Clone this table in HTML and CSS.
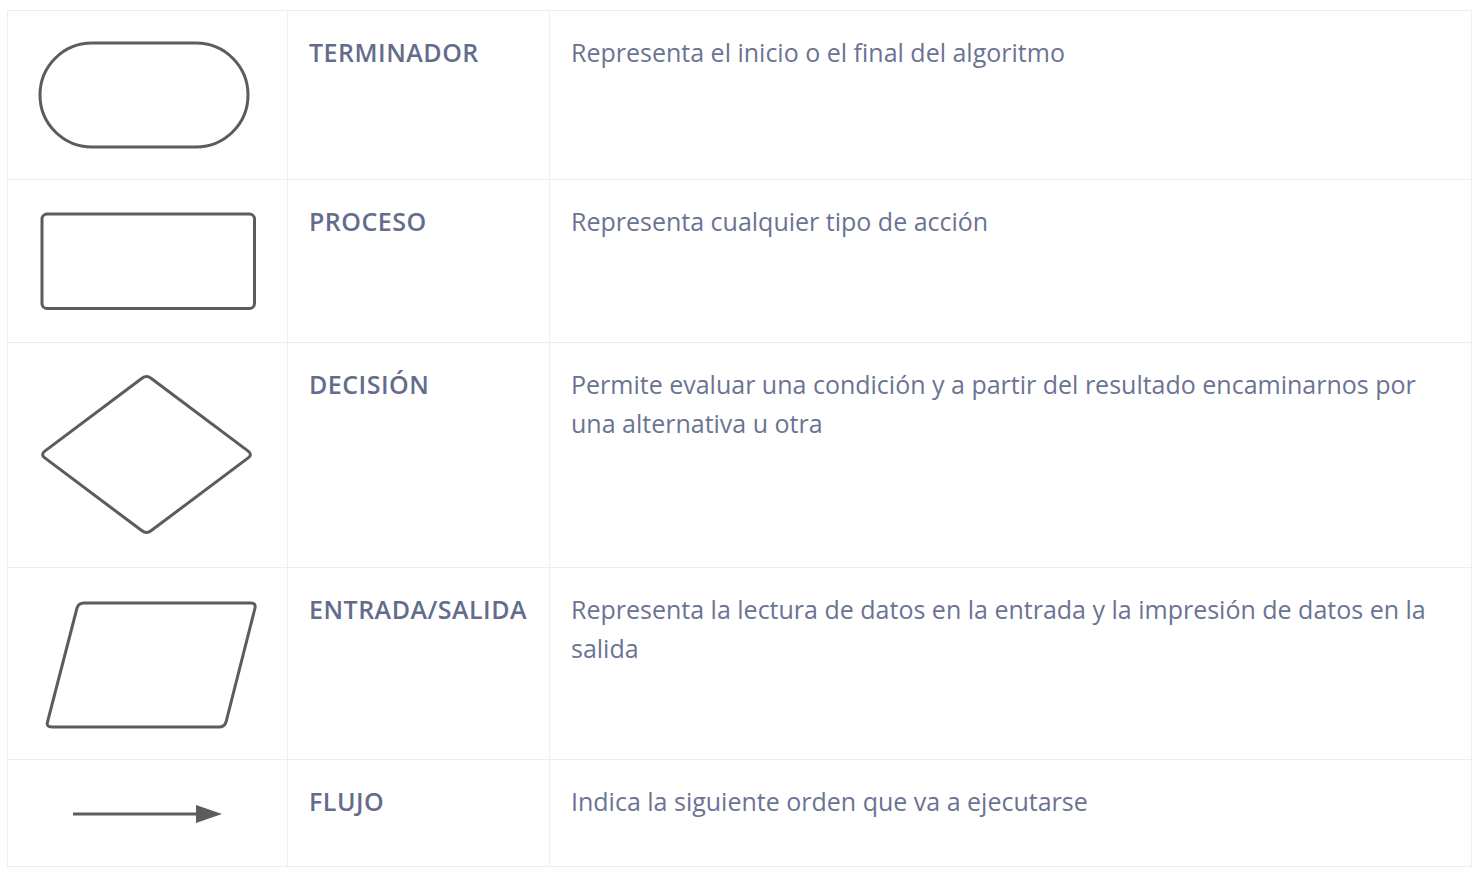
FILE: index.html
```html
<!DOCTYPE html>
<html lang="es">
<head>
<meta charset="utf-8">
<title>Símbolos de diagrama de flujo</title>
<link rel="stylesheet" href="styles.css">
</head>
<body>
<table class="symbols">
  <tr class="row r1">
    <td class="c-shape">
      <svg class="shape" width="233" height="122" viewBox="0 0 233 122">
        <rect x="9" y="9" width="208" height="104" rx="52" ry="52"/>
      </svg>
    </td>
    <td class="c-name">TERMINADOR</td>
    <td class="c-desc">Representa el inicio o el final del algoritmo</td>
  </tr>
  <tr class="row r2">
    <td class="c-shape">
      <svg class="shape" width="233" height="116" viewBox="0 0 233 116">
        <rect x="11" y="11" width="212.5" height="94.5" rx="5" ry="5"/>
      </svg>
    </td>
    <td class="c-name">PROCESO</td>
    <td class="c-desc">Representa cualquier tipo de acción</td>
  </tr>
  <tr class="row r3">
    <td class="c-shape">
      <svg class="shape" width="233" height="178" viewBox="0 0 233 178">
        <path d="M111 12.2 Q115.5 8.8 120 12.2 L217.2 85.1 Q221.7 88.5 217.2 91.9 L120 164.8 Q115.5 168.2 111 164.8 L13.8 91.9 Q9.3 88.5 13.8 85.1 Z"/>
      </svg>
    </td>
    <td class="c-name">DECISIÓN</td>
    <td class="c-desc">Permite evaluar una condición y a partir del resultado encaminarnos por una alternativa u otra</td>
  </tr>
  <tr class="row r4">
    <td class="c-shape">
      <svg class="shape" width="233" height="145" viewBox="0 0 233 145">
        <path d="M53 12 L220 12 Q225 12 224 17 L195 131 Q193.5 136 188 136 L21 136 Q15 136 16.5 131 L46 17 Q47.5 12 53 12 Z"/>
      </svg>
    </td>
    <td class="c-name">ENTRADA/SALIDA</td>
    <td class="c-desc">Representa la lectura de datos en la entrada y la impresión de datos en la salida</td>
  </tr>
  <tr class="row r5">
    <td class="c-shape">
      <svg class="shape" width="233" height="60" viewBox="0 0 233 60">
        <line x1="42" y1="31" x2="168" y2="31"/>
        <polygon class="head" points="165,22 191,31 165,40"/>
      </svg>
    </td>
    <td class="c-name">FLUJO</td>
    <td class="c-desc">Indica la siguiente orden que va a ejecutarse</td>
  </tr>
</table>
</body>
</html>
```

FILE: styles.css
```css
html, body {
  margin: 0;
  padding: 0;
  background: #ffffff;
}

body {
  padding: 10px 11px 0 7px;
  font-family: "Open Sans", "Noto Sans", "Liberation Sans", sans-serif;
}

.symbols {
  width: 1465px;
  border-collapse: collapse;
  border: 1px solid #eeeeee;
  table-layout: fixed;
}

.symbols td {
  border: 1px solid #eeeeee;
  padding: 22px 23px 23px 21px;
  vertical-align: top;
  font-size: 25px;
  line-height: 39px;
  color: #6b7393;
}

.symbols td.c-shape {
  width: 233px;
  padding: 23px;
}

.symbols td.c-name {
  width: 217px;
  font-weight: 600;
  letter-spacing: 0.5px;
  color: #646c8c;
  white-space: nowrap;
}

.shape {
  display: block;
}

.shape rect,
.shape path,
.shape line {
  fill: none;
  stroke: #5c5c5c;
  stroke-width: 3;
}

.shape .head {
  fill: #5c5c5c;
  stroke: none;
}
```
